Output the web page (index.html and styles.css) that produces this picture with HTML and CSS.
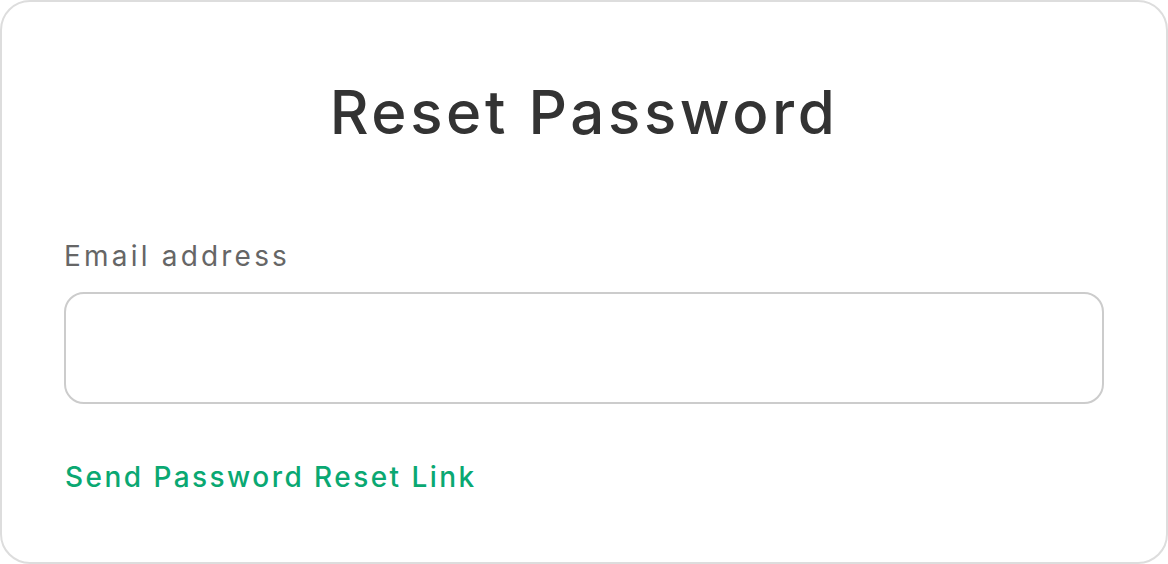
FILE: index.html
```html
<!DOCTYPE html>
<html lang="en">
<head>
<meta charset="utf-8">
<title>Reset Password</title>
<link rel="stylesheet" href="styles.css">
</head>
<body>
  <main class="card">
    <h1 class="title">Reset Password</h1>
    <form class="form">
      <label class="label" for="email">Email address</label>
      <input class="input" id="email" type="email">
      <a class="link" href="#">Send Password Reset Link</a>
    </form>
  </main>
</body>
</html>
```

FILE: styles.css
```css
* { box-sizing: border-box; }

html, body {
  margin: 0;
  padding: 0;
  background: #ffffff;
}

body {
  font-family: "Inter", "Liberation Sans", sans-serif;
}

.card {
  height: 564px;
  border: 2px solid #dddddd;
  border-radius: 30px;
  padding: 75px 62px 0;
  display: flex;
  flex-direction: column;
}

.title {
  margin: 0;
  text-align: center;
  font-size: 60px;
  line-height: 70px;
  font-weight: 500;
  letter-spacing: 3.6px;
  color: #333333;
}

.form {
  display: flex;
  flex-direction: column;
  margin-top: 92px;
}

.label {
  font-size: 28px;
  line-height: 34px;
  font-weight: 400;
  letter-spacing: 3.2px;
  color: #666666;
}

.input {
  margin-top: 19px;
  height: 112px;
  width: 100%;
  border: 2px solid #cccccc;
  border-radius: 20px;
  background: #ffffff;
  font: inherit;
  outline: none;
}

.link {
  margin-top: 56px;
  align-self: flex-start;
  font-size: 28px;
  line-height: 34px;
  font-weight: 500;
  letter-spacing: 2.45px;
  color: #0aa872;
  text-decoration: none;
  padding-left: 1px;
}
```
